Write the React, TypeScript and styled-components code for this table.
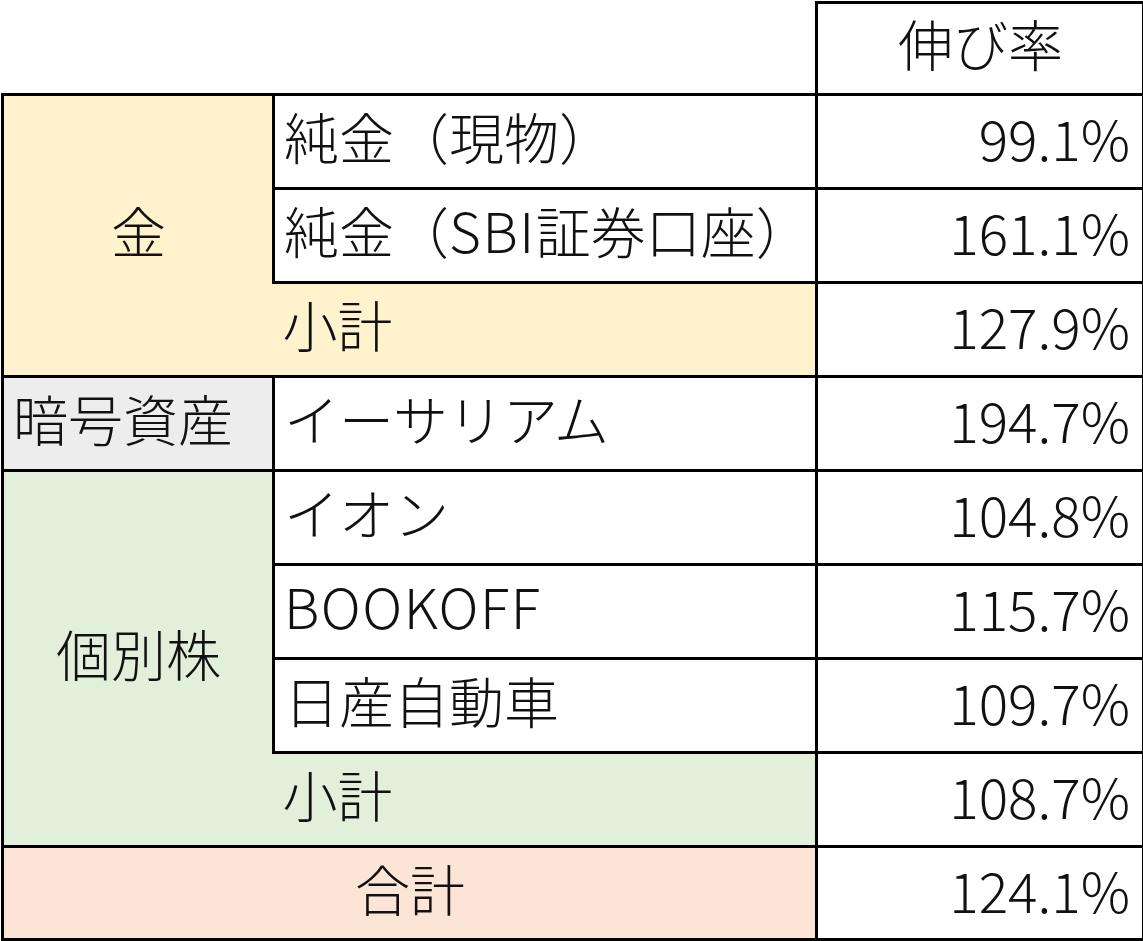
import styled, { createGlobalStyle } from 'styled-components';

const GlobalStyle = createGlobalStyle`
  html, body {
    margin: 0;
    padding: 0;
    background: #fff;
  }
  body {
    font-family: 'Noto Sans CJK JP', 'Noto Sans', sans-serif;
    color: #111;
  }
`;

const fills: Record<string, string> = {
  gold: '#fff2cc',
  gray: '#ededed',
  green: '#e2efda',
  peach: '#fce4d6',
  white: '#ffffff'
};

const Sheet = styled.table`
  border-collapse: collapse;
  table-layout: fixed;
  width: 1141px;
  margin: 1px 0 0 1px;
  font-size: 55px;
  font-weight: 300;
  line-height: 1;
`;

const Row = styled.tr<{ $h?: number }>`
  height: ${(p) => p.$h ?? 94}px;
`;

const Cell = styled.td<{
  $fill?: string;
  $align?: 'left' | 'center' | 'right';
  $noLeft?: boolean;
  $noRight?: boolean;
  $noBorder?: boolean;
}>`
  padding: 0 8px 12px 9px;
  background: ${(p) => fills[p.$fill || 'white']};
  text-align: ${(p) => p.$align || 'left'};
  vertical-align: middle;
  white-space: nowrap;
  overflow: visible;
  border: ${(p) => (p.$noBorder ? 'none' : '3px solid #000')};
  ${(p) => (p.$noLeft ? 'border-left: none;' : '')}
  ${(p) => (p.$noRight ? 'border-right: none;' : '')}
`;

const Latin = styled.span`
  letter-spacing: 1.5px;
`;

const Rate = styled(Cell).attrs({ $align: 'right' })`
  font-size: 55px;
  padding-right: 12px;
  padding-bottom: 8px;
`;

type Item = { name: React.ReactNode; key: string; rate: string };

const gold: Item[] = [
  { key: 'genbutsu', name: '純金（現物）', rate: '99.1%' },
  {
    key: 'sbi',
    name: (
      <>
        純金（<Latin>SBI</Latin>証券口座）
      </>
    ),
    rate: '161.1%'
  }
];

const stocks: Item[] = [
  { key: 'aeon', name: 'イオン', rate: '104.8%' },
  { key: 'bookoff', name: <Latin>BOOKOFF</Latin>, rate: '115.7%' },
  { key: 'nissan', name: '日産自動車', rate: '109.7%' }
];

const App = () => {
  return (
    <>
      <GlobalStyle />
      <Sheet>
        <colgroup>
          <col style={{ width: 271 }} />
          <col style={{ width: 543 }} />
          <col style={{ width: 327 }} />
        </colgroup>
        <tbody>
          <Row $h={92}>
            <Cell $noBorder colSpan={2} />
            <Cell $align="center">伸び率</Cell>
          </Row>

          {gold.map((it, i) => (
            <Row key={it.key}>
              {i === 0 && (
                <Cell $fill="gold" $align="center" $noRight rowSpan={3}>
                  金
                </Cell>
              )}
              <Cell>{it.name}</Cell>
              <Rate>{it.rate}</Rate>
            </Row>
          ))}
          <Row>
            <Cell $fill="gold" $noLeft>
              小計
            </Cell>
            <Rate>127.9%</Rate>
          </Row>

          <Row>
            <Cell $fill="gray">暗号資産</Cell>
            <Cell>イーサリアム</Cell>
            <Rate>194.7%</Rate>
          </Row>

          {stocks.map((it, i) => (
            <Row key={it.key}>
              {i === 0 && (
                <Cell $fill="green" $align="center" $noRight rowSpan={4}>
                  個別株
                </Cell>
              )}
              <Cell>{it.name}</Cell>
              <Rate>{it.rate}</Rate>
            </Row>
          ))}
          <Row>
            <Cell $fill="green" $noLeft>
              小計
            </Cell>
            <Rate>108.7%</Rate>
          </Row>

          <Row $h={93}>
            <Cell $fill="peach" $align="center" colSpan={2}>
              合計
            </Cell>
            <Rate>124.1%</Rate>
          </Row>
        </tbody>
      </Sheet>
    </>
  );
};

export default App;
